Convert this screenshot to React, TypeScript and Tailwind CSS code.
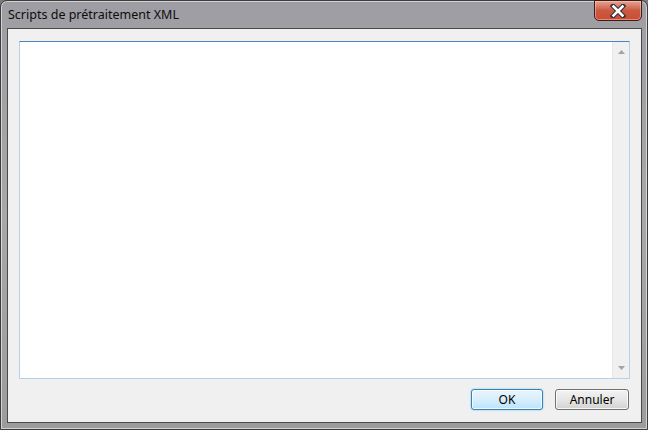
import React from 'react';

const font = { fontFamily: '"Noto Sans", "Open Sans", sans-serif' };

const CloseButton: React.FC = () => (
  <div className="absolute left-[593px] top-[-1px] w-[48px] h-[21px] rounded-b-[5px] border border-[#3b1d18] bg-gradient-to-b from-[#e8a493] via-[#c95a41] to-[#cf4b32] shadow-[inset_0_0_0_1px_rgba(255,220,210,0.45)] flex items-center justify-center">
    <svg width="16" height="14" viewBox="0 0 16 14">
      <path
        d="M3 2 L13 12 M13 2 L3 12"
        stroke="#2f2f3a"
        strokeWidth="4.6"
        strokeLinecap="square"
        fill="none"
      />
      <path
        d="M3.5 2.5 L12.5 11.5 M12.5 2.5 L3.5 11.5"
        stroke="#ffffff"
        strokeWidth="2.6"
        strokeLinecap="square"
        fill="none"
      />
    </svg>
  </div>
);

const Arrow: React.FC<{ up?: boolean }> = ({ up }) => (
  <svg width="7" height="4" viewBox="0 0 7 4">
    <path d={up ? 'M0 4 L3.5 0 L7 4 Z' : 'M0 0 L3.5 4 L7 0 Z'} fill="#a3a3a3" />
  </svg>
);

const App: React.FC = () => {
  return (
    <div className="w-[648px] h-[430px] bg-[#7a7a7a]" style={font}>
      <div className="relative w-[648px] h-[430px] rounded-t-[7px] border border-[#3d3d3d] bg-gradient-to-b from-[#9d9da3] via-[#a8a8a8] to-[#9c9c9c] shadow-[inset_0_0_0_1px_rgba(255,255,255,0.55)] flex flex-col">
        <div className="h-[27px] flex items-start pl-[7px] pt-[6px] text-[12.5px] text-[#0d0d0d] leading-[16px]">
          Scripts de prétraitement XML
        </div>
        <CloseButton />
        <div className="ml-[6px] mr-[5px] h-[395px] border border-[#4a4a4a] bg-[#f0f0f0] flex flex-col px-[11px] pt-[12px]">
          <div className="h-[338px] border border-[#b4d2ec] border-t-[#4d86bd] bg-white flex justify-end">
            <div className="w-[17px] h-full bg-[#f0f0f0] border-l border-[#e6e6e6] flex flex-col items-center justify-between py-[8px]">
              <Arrow up />
              <Arrow />
            </div>
          </div>
          <div className="flex justify-end gap-[12px] mt-[10px] mr-[1px]">
            <button className="w-[72px] h-[21px] rounded-[3px] border border-[#3c7fb1] bg-gradient-to-b from-[#e9f5fd] via-[#d7eefc] to-[#bce4fa] shadow-[inset_0_0_0_1px_rgba(255,255,255,0.7),0_0_2px_#5fc4f5] text-[12px] text-black leading-none" style={font}>
              OK
            </button>
            <button className="w-[74px] h-[21px] rounded-[3px] border border-[#707070] bg-gradient-to-b from-[#f3f3f3] via-[#e6e6e6] to-[#d2d2d2] shadow-[inset_0_0_0_1px_rgba(255,255,255,0.8)] text-[12px] text-black leading-none" style={font}>
              Annuler
            </button>
          </div>
        </div>
      </div>
    </div>
  );
};

export default App;
